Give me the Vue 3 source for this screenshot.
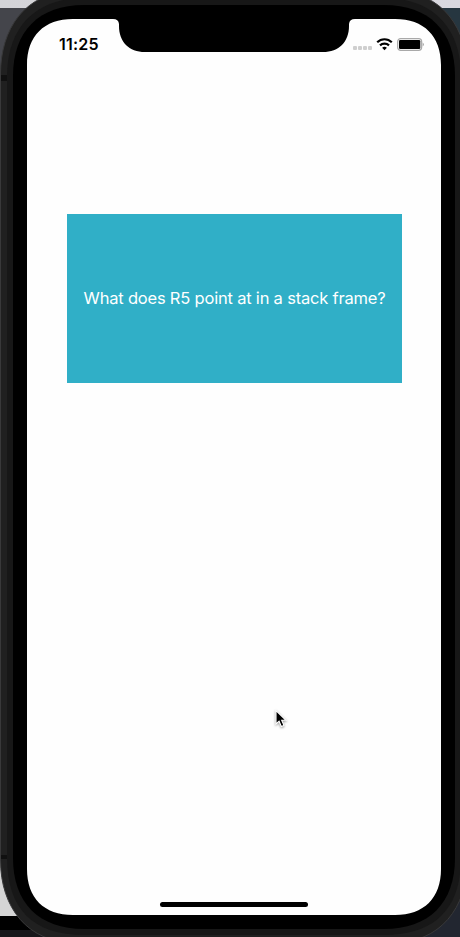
<script setup>
const time = '11:25'
const question = 'What does R5 point at in a stack frame?'
const signalDots = [0, 1, 2, 3]
</script>

<template>
  <main class="stage">
    <svg class="shell" viewBox="0 0 460 937" aria-hidden="true">
      <defs>
        <linearGradient id="top-strip" x1="0" x2="1">
          <stop offset="0" stop-color="#d4d4d8" />
          <stop offset="1" stop-color="#d9d8df" />
        </linearGradient>
      </defs>
      <rect width="460" height="937" fill="#44454b" />
      <rect width="460" height="8" fill="url(#top-strip)" />
      <rect x="400" y="8" width="60" height="120" fill="#263640" />
      <rect y="800" width="80" height="116" fill="#d5d5d5" />
      <rect y="916" width="100" height="14" fill="#000" />
      <rect y="930" width="100" height="7" fill="#17161a" />
      <rect x="400" y="800" width="60" height="137" fill="#222630" />
      <!-- metal frame -->
      <path class="rim" d="M0.500 74C0.500 30 24-9 76-9H392C444-9 467.500 30 467.500 74V860C467.500 908 440 943 392 943H76C28 943 0.500 908 0.500 860Z" />
      <path fill="#171717" d="M7 76C7 29 34-2 84-2H384C434-2 461 29 461 76V858C461 909 435 935 384 935H84C33 935 7 909 7 858Z" />
      <rect x="1" y="75" width="6" height="6" fill="#101010" />
      <rect x="1" y="855" width="6" height="4" fill="#101010" />
      <!-- bezel -->
      <path d="M13 76C13 31 39 5 84 5H384C429 5 455 31 455 76V858C455 903 429 929 384 929H84C39 929 13 903 13 858Z" />
      <!-- display with notch -->
      <path fill="#fefefe" d="M27 65C27 36 44 19 73 19H113Q118.500 19 119 24V26C119 42 129 52 145 52H323C339 52 349 42 349 26V24Q349.500 19 355 19H395C424 19 441 36 441 65V869C441 898 424 915 395 915H73C44 915 27 898 27 869Z" />
    </svg>

    <section class="screen">
      <header class="status">
        <span class="time">{{ time }}</span>
        <div class="indicators">
          <span class="signal"><i v-for="dot in signalDots" :key="dot" /></span>
          <svg class="wifi" viewBox="0 0 17 13" aria-hidden="true">
            <path d="M1.200 4.300C5.300.2 11.700.2 15.800 4.300M4 7.400C6.500 5 10.500 5 13 7.400" fill="none" stroke="#000" stroke-width="2.200" />
            <path d="M6.100 9.800Q8.500 7.700 10.900 9.800L8.500 12.200Z" />
          </svg>
          <svg class="battery" viewBox="0 0 27 13" aria-hidden="true">
            <rect x=".65" y=".65" width="24" height="11.700" rx="3" fill="#fff" stroke="#a9a9a9" stroke-width="1.200" />
            <rect x="2" y="2" width="21.300" height="9" rx="1.300" />
            <path d="M25.600 4.500Q28.400 6.500 25.600 8.500Z" fill="#a9a9a9" />
          </svg>
        </div>
      </header>

      <article class="card">
        <p class="question">{{ question }}</p>
      </article>

      <div class="home-indicator" />
    </section>

    <svg class="cursor" viewBox="0 0 14 20" aria-hidden="true">
      <path d="M2 1.500V15L5.100 12.200L7.300 17.500L9.900 16.400L7.700 11.300H12Z" fill="#000" stroke="#fff" stroke-width="1.100" />
    </svg>
  </main>
</template>

<style>
body {
  margin: 0;
}
</style>

<style scoped>
.stage {
  position: relative;
  width: 460px;
  height: 937px;
  overflow: hidden;
  box-sizing: border-box;
  padding: 19px 19px 22px 27px;
  font-family: Inter, "Liberation Sans", sans-serif;
}

.shell {
  position: absolute;
  inset: 0;
  width: 460px;
  height: 937px;
}

.rim {
  fill: #202020;
  stroke: #39393a;
  stroke-width: 1;
}

.screen {
  position: relative;
  display: flex;
  flex-direction: column;
  align-items: center;
  width: 414px;
  height: 896px;
}

.status {
  display: flex;
  align-items: center;
  justify-content: space-between;
  box-sizing: border-box;
  width: 100%;
  height: 50px;
  padding: 0 17px 0 32px;
}

.time {
  font-size: 16px;
  font-weight: 600;
  line-height: 20px;
  letter-spacing: 0.2px;
}

.indicators {
  display: flex;
  align-items: center;
}

.signal {
  display: flex;
  gap: 1px;
  margin: 7px 4px 0 0;
}

.signal i {
  width: 4px;
  height: 4px;
  border-radius: 1px;
  background: #cfcfcf;
}

.wifi {
  width: 17px;
  height: 13px;
  margin-right: 4px;
}

.battery {
  width: 27px;
  height: 13px;
}

.card {
  display: flex;
  align-items: center;
  justify-content: center;
  box-sizing: border-box;
  width: 335px;
  height: 169px;
  margin: 145px 0 0 1px;
  padding-bottom: 1px;
  background: #30afc7;
}

.question {
  margin: 0;
  color: #fff;
  font-size: 16.5px;
  font-weight: 400;
  line-height: 20px;
  letter-spacing: -0.2px;
  white-space: nowrap;
}

.home-indicator {
  width: 148px;
  height: 5px;
  margin: auto 0 8px;
  border-radius: 3px;
  background: #000;
}

.cursor {
  position: absolute;
  left: 274px;
  top: 709px;
  width: 14px;
  height: 20px;
  filter: drop-shadow(0 1px 1px rgba(0, 0, 0, 0.4));
}
</style>
